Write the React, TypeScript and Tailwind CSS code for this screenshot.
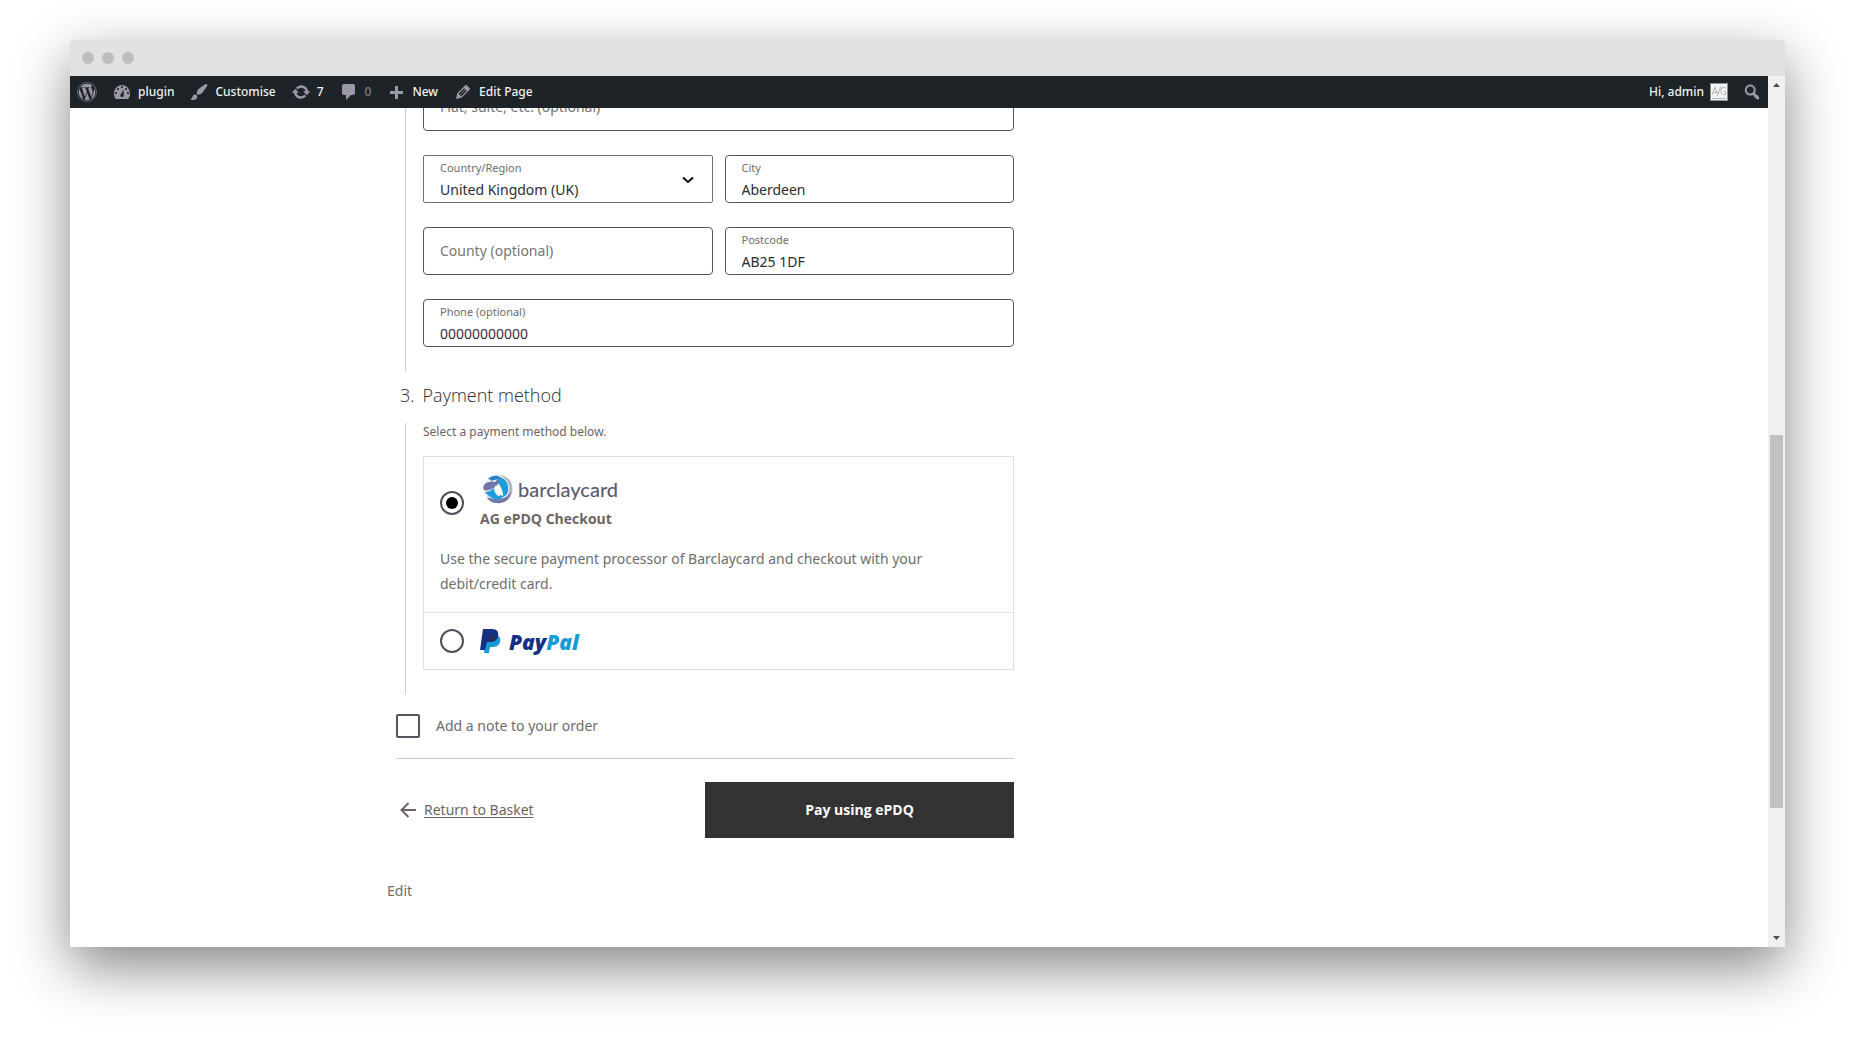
import React, { useState } from 'react';
import { FaWordpress } from 'react-icons/fa';

const DASHICONS = {
  dashboard:
    'M3.76 17h12.48c1.11-1.49 1.76-3.36 1.76-5.38C18 6.86 14.42 3 10 3S2 6.86 2 11.62c0 2.02.65 3.89 1.76 5.38zM10 4c.55 0 1 .45 1 1s-.45 1-1 1-1-.45-1-1 .45-1 1-1zM6 6c.55 0 1 .45 1 1s-.45 1-1 1-1-.45-1-1 .45-1 1-1zm8 0c.55 0 1 .45 1 1s-.45 1-1 1-1-.45-1-1 .45-1 1-1zM11.500 7.500L11.700 13c.1 1.200-.7 2-1.700 2s-1.800-.8-1.700-1.800c.1-.7.5-1 1-1.400zM4 10c.55 0 1 .45 1 1s-.45 1-1 1-1-.45-1-1 .45-1 1-1zm12 0c.55 0 1 .45 1 1s-.45 1-1 1-1-.45-1-1 .45-1 1-1z',
  brush:
    'M18.33 3.57s.27-.8-.31-1.36c-.53-.52-1.22-.24-1.22-.24-.61.3-5.76 3.47-7.67 5.57-.86.96-2.06 3.79-1.09 4.82.92.98 3.96-.17 4.79-1 2.06-2.06 5.21-7.17 5.5-7.79zM1.4 17.65c2.37-1.56 1.46-3.41 3.23-4.64.93-.65 2.22-.62 3.08.29.63.67.8 2.57-.16 3.46-1.57 1.45-4 1.55-6.15.89z',
  update:
    'M10.2 3.28c3.53 0 6.43 2.61 6.92 6h2.08l-3.5 4-3.5-4h2.32c-.45-1.97-2.21-3.45-4.32-3.45-1.45 0-2.73.71-3.54 1.78L4.95 5.66C6.23 4.2 8.11 3.28 10.2 3.28zm-.4 13.44c-3.52 0-6.43-2.61-6.92-6H.8l3.5-4c1.17 1.33 2.33 2.67 3.5 4H5.48c.45 1.97 2.21 3.45 4.32 3.45 1.45 0 2.73-.71 3.54-1.78l1.71 1.95c-1.28 1.46-3.15 2.38-5.25 2.38z',
  comments:
    'M5 2h9c1.1 0 2 .9 2 2v7c0 1.1-.9 2-2 2h-2l-5 5v-5H5c-1.1 0-2-.9-2-2V4c0-1.1.9-2 2-2z',
  plus: 'M17 9v3h-5v5H9v-5H4V9h5V4h3v5h5z',
  edit:
    'M13.89 3.39l2.71 2.72c.46.46.42 1.24.03 1.64l-8.01 8.02-5.56 1.16 1.16-5.58s7.6-7.63 7.99-8.03c.39-.39 1.22-.39 1.68.07zm-2.73 2.79l-5.59 5.61 1.11 1.11 5.54-5.65zm-2.97 8.23l5.58-5.6-1.07-1.08-5.59 5.6z',
  search:
    'M12.14 4.18c1.87 1.87 2.11 4.75.72 6.89.12.1.22.21.36.31.2.16.47.36.81.59.34.24.56.39.66.47.42.31.73.57.94.78.32.32.6.65.84 1 .25.35.44.69.59 1.04.14.35.21.68.18 1-.02.32-.14.59-.36.81s-.49.34-.81.36c-.31.02-.65-.04-.99-.19-.35-.14-.7-.34-1.04-.59-.35-.24-.68-.52-1-.84-.21-.21-.47-.52-.77-.93-.1-.13-.25-.35-.47-.66-.22-.32-.4-.57-.56-.78-.16-.2-.29-.35-.44-.5-2.07 1.09-4.69.76-6.44-.98-2.14-2.15-2.14-5.64 0-7.78 2.15-2.15 5.63-2.15 7.78 0zm-1.41 6.36c1.36-1.37 1.36-3.58 0-4.95-1.37-1.37-3.59-1.37-4.95 0-1.37 1.37-1.37 3.58 0 4.95 1.36 1.37 3.58 1.37 4.95 0z',
};

const Dashicon: React.FC<{ name: keyof typeof DASHICONS }> = ({ name }) => (
  <svg viewBox="0 0 20 20" className="size-5 shrink-0 fill-[#9b98a5]" aria-hidden="true">
    <path d={DASHICONS[name]} fillRule="evenodd" />
  </svg>
);

const ADMIN_LINKS: { icon: keyof typeof DASHICONS; label: string; dim?: boolean }[] = [
  { icon: 'dashboard', label: 'plugin' },
  { icon: 'brush', label: 'Customise' },
  { icon: 'update', label: '7' },
  { icon: 'comments', label: '0', dim: true },
  { icon: 'plus', label: 'New' },
  { icon: 'edit', label: 'Edit Page' },
];

const AdminBar = () => (
  <nav className="flex h-8 shrink-0 items-center justify-between bg-[#1d2327] pr-[6px] pl-[7px] font-['Noto_Sans','Open_Sans',sans-serif] text-xs font-medium text-[#f0f0f1]">
    <div className="flex items-center gap-[15px]">
      <a href="#wordpress" aria-label="About WordPress">
        <FaWordpress className="size-5 text-[#9b98a5]" />
      </a>
      {ADMIN_LINKS.map(link => (
        <a key={link.icon} href={`#${link.icon}`} className="flex items-center gap-[6px]">
          <Dashicon name={link.icon} />
          <span className={link.dim ? 'text-[#7d7c86]' : ''}>{link.label}</span>
        </a>
      ))}
    </div>
    <div className="flex items-center gap-[14px]">
      <a href="#profile" className="flex items-center gap-[6px]">
        Hi, admin
        <svg viewBox="0 0 18 18" className="size-[18px]" aria-hidden="true">
          <rect x=".5" y=".5" width="17" height="17" fill="#f4f4f4" stroke="#8c8f94" />
          <path
            d="M2 12l3-8 3 8M3 9.500h4M7 14l4-11M16 5c-3-2-5 0-5 3s2 5 5 3V8.500h-2M2 15.500h14"
            fill="none"
            stroke="#b4b5b8"
          />
        </svg>
      </a>
      <button type="button" aria-label="Search">
        <Dashicon name="search" />
      </button>
    </div>
  </nav>
);

interface FieldProps {
  id: string;
  label: string;
  value?: string;
}

const Field: React.FC<FieldProps> = ({ id, label, value }) => (
  <div className="flex h-12 flex-col rounded border border-[#50575e] px-4">
    {value ? (
      <>
        <label htmlFor={id} className="mt-1 text-[11px] leading-4 text-[#6d6d6d]">
          {label}
        </label>
        <input id={id} defaultValue={value} className="h-7 w-full text-sm leading-7 text-[#2b2d2f] outline-none" />
      </>
    ) : (
      <input
        id={id}
        aria-label={label}
        placeholder={label}
        className="h-11 w-full text-sm outline-none placeholder:text-[#757575]"
      />
    )}
  </div>
);

const CountrySelect = () => (
  <div className="flex h-12 items-center rounded-xs border border-[#6c6f78] pr-[18px] pl-4">
    <div className="flex h-full grow flex-col">
      <label htmlFor="country" className="mt-1 text-[11px] leading-4 text-[#6d6d6d]">
        Country/Region
      </label>
      <select id="country" className="h-7 w-full appearance-none text-sm leading-7 text-[#2b2d2f] outline-none">
        <option>United Kingdom (UK)</option>
      </select>
    </div>
    <svg viewBox="0 0 12 8" className="mt-[2px] h-2 w-3" aria-hidden="true">
      <path d="M1 1.500l5 4.500 5-4.500" fill="none" stroke="#000" strokeWidth="1.800" />
    </svg>
  </div>
);

const BarclaycardLogo = () => (
  <span className="flex h-8 items-center gap-[5px] pl-[3px]">
    <svg viewBox="0 0 30 30" className="size-[30px]" aria-hidden="true">
      <circle cx="15" cy="15" r="14.500" fill="#eeeef0" />
      <path d="M17 1c9 1 14 9 12 17-1 6-5 10-11 11 7-5 9-11 8-17-1-5-4-8-9-11z" fill="#b4b6c2" />
      <path d="M5 5c4-4 9-4 12-2l2 4c-4-2-8-2-11 1 1-2 0-2-3-3z" fill="#2b7fc6" />
      <path d="M17 3c6 2 9 7 8 13 0 5-4 8-9 7 3-4 4-8 0-13l-3-3c2-1 3-2 4-4z" fill="#1b9ddb" />
      <path d="M1 11c2-3 6-4 11-3l3-3c2 3 0 6-3 8-4 3-8 4-11 3-1-1-1-3 0-5z" fill="#7376ab" />
      <path d="M12 12c5-1 8 4 8 10-4-1-7-4-8-10z" fill="#fff" />
      <path d="M2 18c4 0 7-2 9-4 0 5 3 9 9 9-3 3-6 3-9 2-4-2-7-4-9-7z" fill="#1b9ddb" />
      <path d="M4 24c3-1 5 1 8 1 6 1 12-1 16-7-1 7-7 12-14 11-4 0-8-2-10-5z" fill="#7376ab" />
    </svg>
    <span className="font-['Lato',sans-serif] text-xl leading-8 font-medium text-[#5c5a70]">barclaycard</span>
  </span>
);

const PayPalLogo = () => (
  <span className="flex h-6 items-center gap-2">
    <svg viewBox="0 0 21 24" className="h-6 w-[21px]" aria-hidden="true">
      <path d="M6 6h10c4 1 5 4 4 7-1 4-4 5-8 5h-2l-1 6H4z" fill="#179bd7" />
      <path d="M3 0h9c5 0 7 3 6 7-1 4-4 6-8 6H7l-2 8H0z" fill="#142f86" />
      <path d="M8 6h10v1c-1 4-4 6-8 6H7z" fill="#222d65" />
    </svg>
    <span className="pt-[2px] font-['Open_Sans',sans-serif] text-[21px] leading-6 font-extrabold text-[#142f86] italic">
      Pay<span className="text-[#179bd7]">Pal</span>
    </span>
  </span>
);

const RADIO =
  'grid size-6 shrink-0 appearance-none place-content-center rounded-full border-2 border-[#50505c] bg-white before:size-3 before:rounded-full checked:before:bg-black';

const PaymentMethods = () => {
  const [method, setMethod] = useState('epdq');

  return (
    <div className="border border-[#e0e0e0]">
      <div className="px-4 pt-4">
        <label className="flex items-center gap-4 font-['Open_Sans',sans-serif] text-sm font-bold text-[#6d6463]">
          <input
            type="radio"
            name="method"
            className={RADIO}
            checked={method === 'epdq'}
            onChange={() => setMethod('epdq')}
          />
          <span className="flex flex-col">
            <BarclaycardLogo />
            <span className="leading-7">AG ePDQ Checkout</span>
          </span>
        </label>
        <p className="pt-[13px] pb-4 text-sm leading-[25px] text-[#6d6d6d]">
          Use the secure payment processor of Barclaycard and checkout with your debit/credit card.
        </p>
      </div>
      <label className="flex h-[57px] items-center gap-4 border-t border-[#e0e0e0] px-4">
        <input
          type="radio"
          name="method"
          className={RADIO}
          checked={method === 'paypal'}
          onChange={() => setMethod('paypal')}
        />
        <PayPalLogo />
      </label>
    </div>
  );
};

const Checkout = () => (
  <form className="ml-[9px] max-w-[618px]" onSubmit={e => e.preventDefault()}>
    {/* address step is scrolled partly under the admin bar */}
    <section className="-mt-[25px] ml-[9px] grid grid-cols-2 gap-x-3 gap-y-6 border-l border-[#ccc] pb-6 pl-[17px]">
      <div className="col-span-2">
        <Field id="address2" label="Flat, suite, etc. (optional)" />
      </div>
      <CountrySelect />
      <Field id="city" label="City" value="Aberdeen" />
      <Field id="county" label="County (optional)" />
      <Field id="postcode" label="Postcode" value="AB25 1DF" />
      <div className="col-span-2">
        <Field id="phone" label="Phone (optional)" value="00000000000" />
      </div>
    </section>

    <h2 className="flex gap-2 pl-1 font-['Open_Sans',sans-serif] text-lg leading-[48px] font-light text-[#2b2d2f]">
      <span>3.</span>
      <span>Payment method</span>
    </h2>
    <section className="mt-1 ml-[9px] border-l border-[#ccc] pb-6 pl-[17px]">
      <p className="mb-4 text-xs leading-[17px] text-[#6d6463]">Select a payment method below.</p>
      <PaymentMethods />
    </section>

    <div className="flex items-center gap-4 border-b border-[#ccc] py-5">
      <input
        id="note"
        type="checkbox"
        className="size-6 appearance-none rounded-xs border-2 border-[#50575e] checked:bg-[#50575e]"
      />
      <label htmlFor="note" className="text-sm text-[#6d6d6d]">
        Add a note to your order
      </label>
    </div>

    <div className="flex items-center justify-between pt-[23px]">
      <a href="#basket" className="flex items-center gap-2 pl-1 text-sm text-[#6d6463]">
        <svg viewBox="0 0 16 16" className="size-4" aria-hidden="true">
          <path d="M8.500 1L1.500 8l7 7M1.500 8H16" fill="none" stroke="#6d6463" strokeWidth="2" />
        </svg>
        <span className="underline underline-offset-2">Return to Basket</span>
      </a>
      <button
        type="submit"
        className="h-14 w-1/2 bg-[#333] font-['Open_Sans',sans-serif] text-sm font-bold text-white"
      >
        Pay using ePDQ
      </button>
    </div>
  </form>
);

const Scrollbar = () => (
  <div className="flex w-[17px] shrink-0 flex-col items-center bg-[#f0f0f0]">
    <svg viewBox="0 0 17 17" className="size-[17px] shrink-0 fill-[#50505c]" aria-hidden="true">
      <path d="M5 11h7L8.500 7z" />
    </svg>
    <div className="grow-[342]" />
    <div className="w-[13px] grow-[373] bg-[#c1c1c1]" />
    <div className="grow-[122]" />
    <svg viewBox="0 0 17 17" className="size-[17px] shrink-0 fill-[#50505c]" aria-hidden="true">
      <path d="M5 6h7L8.500 10z" />
    </svg>
  </div>
);

export default function App() {
  return (
    <div className="flex min-h-screen flex-col bg-white px-[70px] pt-10 pb-[100px] font-['Noto_Sans','Open_Sans',sans-serif]">
      <div className="flex grow flex-col rounded-t bg-white shadow-[0_20px_56px_rgba(0,0,0,0.48)]">
        <div className="flex h-9 shrink-0 items-center gap-2 rounded-t bg-[#e1e1e1] px-3">
          <span className="size-3 rounded-full bg-[#bdbdbd]" />
          <span className="size-3 rounded-full bg-[#bdbdbd]" />
          <span className="size-3 rounded-full bg-[#bdbdbd]" />
        </div>
        <div className="flex grow">
          <div className="flex min-w-0 grow flex-col">
            <AdminBar />
            <main className="grow overflow-hidden">
              <div className="mx-auto max-w-[1064px]">
                <Checkout />
                <a href="#edit" className="mt-[41px] inline-block text-sm leading-6 text-[#6d6d6d]">
                  Edit
                </a>
              </div>
            </main>
          </div>
          <Scrollbar />
        </div>
      </div>
    </div>
  );
}
